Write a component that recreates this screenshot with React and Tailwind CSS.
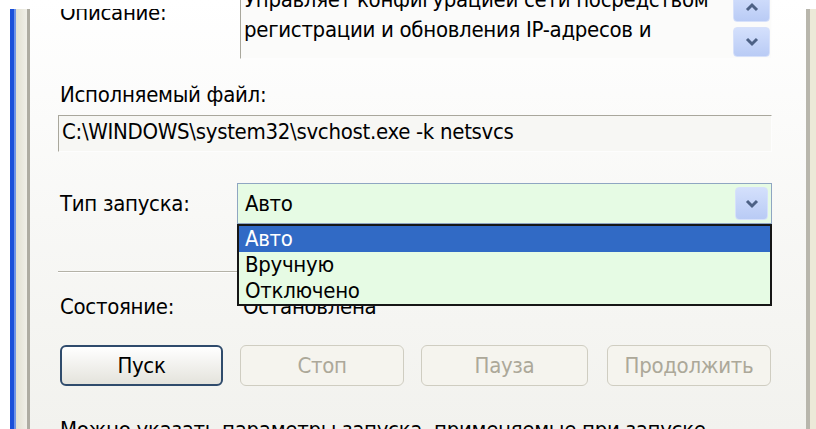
import { useState } from "react"

function ChevronDown({ className = "" }) {
  return (
    <svg width="14" height="10" viewBox="0 0 14 10" className={className}>
      <polyline points="2,2 7,7 12,2" fill="none" stroke="#4d6185" strokeWidth="3" strokeLinejoin="miter" />
    </svg>
  )
}

function ChevronUp({ className = "" }) {
  return (
    <svg width="14" height="10" viewBox="0 0 14 10" className={className}>
      <polyline points="2,8 7,3 12,8" fill="none" stroke="#4d6185" strokeWidth="3" strokeLinejoin="miter" />
    </svg>
  )
}

function ArrowButton({ children, className = "" }) {
  return (
    <div
      className={
        "flex items-center justify-center rounded-[4px] border border-[#d7e1fa] bg-gradient-to-b from-[#d4e0fc] to-[#b9cbf5] " +
        className
      }
    >
      {children}
    </div>
  )
}

function PushButton({ label, disabled, className = "" }) {
  return (
    <div
      className={
        "flex h-[41px] items-center justify-center rounded-[6px] leading-[26px] " +
        (disabled
          ? "border border-[#cfcdc1] bg-[#f5f4ee] text-[#aca899] "
          : "border-2 border-[#2f4b6c] bg-gradient-to-b from-white to-[#e4e3dc] text-black ") +
        className
      }
    >
      {label}
    </div>
  )
}

const startupTypes = ["Авто", "Вручную", "Отключено"]

export default function App() {
  const [selected] = useState(0)

  return (
    <div className="flex h-[429px] w-[816px] overflow-hidden bg-white font-['DejaVu_Sans_Condensed','DejaVu_Sans',sans-serif] text-[22px] tracking-[-0.3px] text-black">
      {/* window frame, left side */}
      <div className="ml-[10px] mt-[9px] w-[4px] bg-[#1a4fd9]" />
      <div className="mt-[9px] w-[2px] bg-[#6e93e6]" />
      <div className="mt-[9px] w-[11px] bg-gradient-to-r from-[#e2e0d1] to-[#f0efe8]" />
      <div className="mt-[9px] w-[3px] bg-[#aeaca2]" />

      {/* tab page */}
      <div className="flex flex-1 flex-col overflow-hidden bg-gradient-to-b from-white via-[#f8f8f6] to-[#f2f2ee] pl-[28px] pr-[34px]">
        {/* description */}
        <div className="mt-[-17px] flex items-start">
          <div className="ml-[2px] mt-[26px] h-[20px] w-[180px] overflow-hidden">
            <div className="mt-[-10px] leading-[27px]">Описание:</div>
          </div>
          <div className="flex flex-1 border-l border-t border-b border-r border-l-[#a9a79c] border-t-[#a9a79c] border-b-[#fdfdfd] border-r-[#fdfdfd] bg-[#fbfbfa]">
            <div className="flex-1 whitespace-nowrap pb-[13px] pl-[3px] pt-[1px] leading-[30px]">
              <div>Управляет конфигурацией сети посредством</div>
              <div>регистрации и обновления IP-адресов и</div>
            </div>
            <div className="flex flex-col justify-end gap-[5px] pb-[1px] pr-[1px]">
              <ArrowButton className="h-[30px] w-[37px]">
                <ChevronUp />
              </ArrowButton>
              <ArrowButton className="h-[30px] w-[37px]">
                <ChevronDown />
              </ArrowButton>
            </div>
          </div>
        </div>

        {/* executable path */}
        <div className="ml-[2px] mt-[23px] leading-[26px]">Исполняемый файл:</div>
        <div className="mt-[7px] whitespace-nowrap border border-l-[#a9a79c] border-t-[#a9a79c] border-b-[#fdfdfd] border-r-[#fdfdfd] bg-[#f7f7f4] pb-[6px] pl-[3px] pt-[3px] leading-[26px]">
          C:\WINDOWS\system32\svchost.exe -k netsvcs
        </div>

        {/* startup type */}
        <div className="mt-[31px] flex items-start">
          <div className="ml-[2px] mt-[8px] w-[177px] leading-[26px]">Тип запуска:</div>
          <div className="relative h-[41px] flex-1">
            <div className="flex h-full items-center border border-[#8fa6c2] bg-[#e6fbe4] pl-[7px] pr-[3px]">
              <div className="flex-1 leading-[26px]">{startupTypes[selected]}</div>
              <ArrowButton className="h-[33px] w-[33px]">
                <ChevronDown />
              </ArrowButton>
            </div>
            <div className="absolute left-0 right-0 top-[41px] z-10 border-2 border-[#161616] bg-[#e6fbe4]">
              {startupTypes.map((t, i) => (
                <div
                  key={t}
                  className={
                    "h-[26px] pl-[6px] leading-[26px] " + (i === selected ? "bg-[#316ac5] text-white" : "text-black")
                  }
                >
                  {t}
                </div>
              ))}
            </div>
          </div>
        </div>

        {/* separator */}
        <div className="mt-[47px] border-b border-t border-b-white border-t-[#b4b2a7]" />

        {/* status */}
        <div className="mt-[21px] flex leading-[26px]">
          <div className="ml-[2px] w-[183px]">Состояние:</div>
          <div>Остановлена</div>
        </div>

        {/* service controls */}
        <div className="mt-[25px] flex">
          <PushButton label="Пуск" className="ml-[2px] w-[163px]" />
          <PushButton label="Стоп" disabled className="ml-[17px] w-[164px]" />
          <PushButton label="Пауза" disabled className="ml-[17px] w-[167px]" />
          <PushButton label="Продолжить" disabled className="ml-[19px] w-[164px]" />
        </div>

        <div className="ml-[2px] mt-[31px] whitespace-nowrap leading-[26px]">
          Можно указать параметры запуска, применяемые при запуске
        </div>
      </div>

      {/* window frame, right side */}
      <div className="mt-[9px] w-[4px] bg-[#b8b6ac]" />
      <div className="mt-[9px] w-[6px] bg-[#ece9d8]" />
    </div>
  )
}
